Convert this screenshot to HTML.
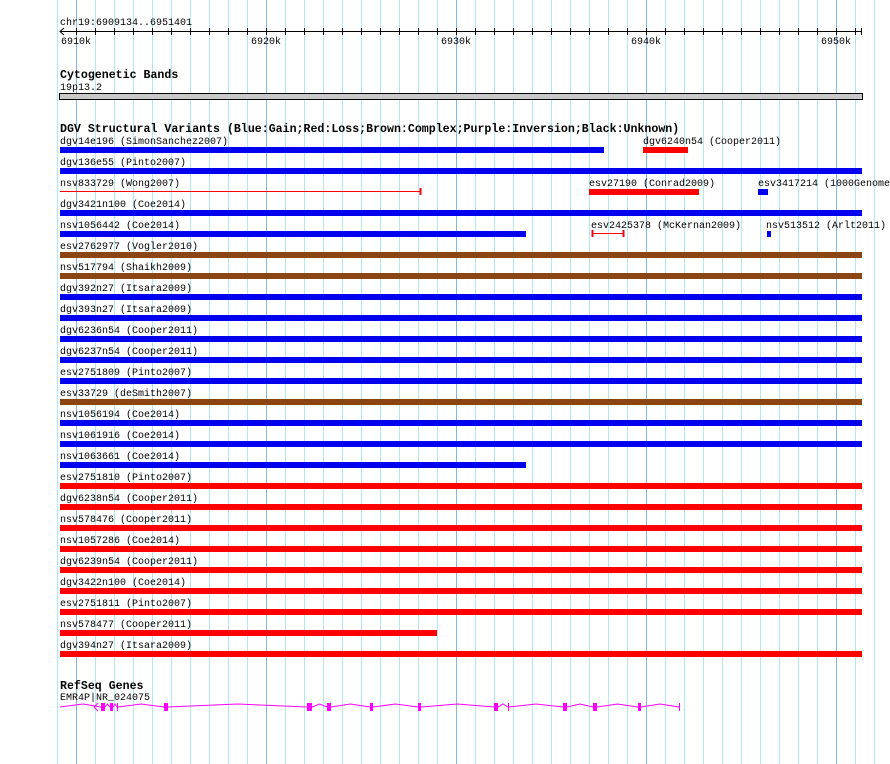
<!DOCTYPE html>
<html><head><meta charset="utf-8"><style>
html,body{margin:0;padding:0;background:#fff;width:890px;height:764px;overflow:hidden}
svg{display:block}
text{font-family:"Liberation Mono","DejaVu Sans Mono",monospace;font-size:10px;fill:#000}
.b{font-weight:bold;font-size:11.6px}
</style></head><body>
<svg width="890" height="764" viewBox="0 0 890 764" xmlns="http://www.w3.org/2000/svg">
<g stroke="#b0e8f2" stroke-width="1">
<line x1="57.5" y1="0" x2="57.5" y2="764"/><line x1="95.5" y1="0" x2="95.5" y2="764"/><line x1="114.5" y1="0" x2="114.5" y2="764"/><line x1="133.5" y1="0" x2="133.5" y2="764"/><line x1="152.5" y1="0" x2="152.5" y2="764"/><line x1="171.5" y1="0" x2="171.5" y2="764"/><line x1="190.5" y1="0" x2="190.5" y2="764"/><line x1="209.5" y1="0" x2="209.5" y2="764"/><line x1="228.5" y1="0" x2="228.5" y2="764"/><line x1="247.5" y1="0" x2="247.5" y2="764"/><line x1="285.5" y1="0" x2="285.5" y2="764"/><line x1="304.5" y1="0" x2="304.5" y2="764"/><line x1="323.5" y1="0" x2="323.5" y2="764"/><line x1="342.5" y1="0" x2="342.5" y2="764"/><line x1="361.5" y1="0" x2="361.5" y2="764"/><line x1="380.5" y1="0" x2="380.5" y2="764"/><line x1="399.5" y1="0" x2="399.5" y2="764"/><line x1="418.5" y1="0" x2="418.5" y2="764"/><line x1="437.5" y1="0" x2="437.5" y2="764"/><line x1="475.5" y1="0" x2="475.5" y2="764"/><line x1="494.5" y1="0" x2="494.5" y2="764"/><line x1="513.5" y1="0" x2="513.5" y2="764"/><line x1="532.5" y1="0" x2="532.5" y2="764"/><line x1="551.5" y1="0" x2="551.5" y2="764"/><line x1="570.5" y1="0" x2="570.5" y2="764"/><line x1="589.5" y1="0" x2="589.5" y2="764"/><line x1="608.5" y1="0" x2="608.5" y2="764"/><line x1="627.5" y1="0" x2="627.5" y2="764"/><line x1="665.5" y1="0" x2="665.5" y2="764"/><line x1="684.5" y1="0" x2="684.5" y2="764"/><line x1="703.5" y1="0" x2="703.5" y2="764"/><line x1="722.5" y1="0" x2="722.5" y2="764"/><line x1="741.5" y1="0" x2="741.5" y2="764"/><line x1="760.5" y1="0" x2="760.5" y2="764"/><line x1="779.5" y1="0" x2="779.5" y2="764"/><line x1="798.5" y1="0" x2="798.5" y2="764"/><line x1="817.5" y1="0" x2="817.5" y2="764"/><line x1="855.5" y1="0" x2="855.5" y2="764"/><line x1="874.5" y1="0" x2="874.5" y2="764"/>
</g>
<g stroke="#80b8ec" stroke-width="1">
<line x1="76.5" y1="0" x2="76.5" y2="764"/><line x1="266.5" y1="0" x2="266.5" y2="764"/><line x1="456.5" y1="0" x2="456.5" y2="764"/><line x1="646.5" y1="0" x2="646.5" y2="764"/><line x1="836.5" y1="0" x2="836.5" y2="764"/>
</g>

<text x="60" y="25">chr19:6909134..6951401</text>
<line x1="60" y1="31.5" x2="862" y2="31.5" stroke="#000"/>
<path d="M64 28 L60 31.5 L64 35" stroke="#000" fill="none"/>
<path stroke="#000" d="M76.5 28v7M95.5 28v7M114.5 28v7M133.5 28v7M152.5 28v7M171.5 28v7M190.5 28v7M209.5 28v7M228.5 28v7M247.5 28v7M266.5 28v7M285.5 28v7M304.5 28v7M323.5 28v7M342.5 28v7M361.5 28v7M380.5 28v7M399.5 28v7M418.5 28v7M437.5 28v7M456.5 28v7M475.5 28v7M494.5 28v7M513.5 28v7M532.5 28v7M551.5 28v7M570.5 28v7M589.5 28v7M608.5 28v7M627.5 28v7M646.5 28v7M665.5 28v7M684.5 28v7M703.5 28v7M722.5 28v7M741.5 28v7M760.5 28v7M779.5 28v7M798.5 28v7M817.5 28v7M836.5 28v7M855.5 28v7M861.5 28v7"/>
<text x="61" y="44">6910k</text><text x="251" y="44">6920k</text><text x="441" y="44">6930k</text><text x="631" y="44">6940k</text><text x="821" y="44">6950k</text>

<text x="60" y="78" class="b">Cytogenetic Bands</text>
<text x="60" y="90">19p13.2</text>
<rect x="59.5" y="93.5" width="803" height="6" fill="#c8c8c8" stroke="#000"/>

<text x="60" y="132" class="b">DGV Structural Variants (Blue:Gain;Red:Loss;Brown:Complex;Purple:Inversion;Black:Unknown)</text>

<text x="60" y="144">dgv14e196 (SimonSanchez2007)</text><rect x="60" y="147" width="544" height="6" fill="#0000ee"/>
<text x="643" y="144">dgv6240n54 (Cooper2011)</text><rect x="643" y="147" width="45" height="6" fill="#ff0000"/>
<text x="60" y="165">dgv136e55 (Pinto2007)</text><rect x="60" y="168" width="802" height="6" fill="#0000ee"/>
<text x="60" y="186">nsv833729 (Wong2007)</text>
<line x1="60" y1="191.5" x2="421" y2="191.5" stroke="#ff0000"/><line x1="420.5" y1="188" x2="420.5" y2="195" stroke="#ff0000" stroke-width="2"/>
<text x="589" y="186">esv27190 (Conrad2009)</text><rect x="589" y="189" width="110" height="6" fill="#ff0000"/>
<text x="758" y="186">esv3417214 (1000Genomes</text><rect x="758" y="189" width="10" height="6" fill="#0000ee"/>
<text x="60" y="207">dgv3421n100 (Coe2014)</text><rect x="60" y="210" width="802" height="6" fill="#0000ee"/>
<text x="60" y="228">nsv1056442 (Coe2014)</text><rect x="60" y="231" width="466" height="6" fill="#0000ee"/>
<text x="591" y="228">esv2425378 (McKernan2009)</text>
<line x1="592" y1="233.5" x2="624" y2="233.5" stroke="#ff0000"/><line x1="592.5" y1="230" x2="592.5" y2="237" stroke="#ff0000" stroke-width="2"/><line x1="623.5" y1="230" x2="623.5" y2="237" stroke="#ff0000" stroke-width="2"/>
<text x="766" y="228">nsv513512 (Arlt2011)</text><rect x="767" y="231" width="4" height="6" fill="#0000ee"/>
<text x="60" y="249">esv2762977 (Vogler2010)</text><rect x="60" y="252" width="802" height="6" fill="#8b4513"/>
<text x="60" y="270">nsv517794 (Shaikh2009)</text><rect x="60" y="273" width="802" height="6" fill="#8b4513"/>
<text x="60" y="291">dgv392n27 (Itsara2009)</text><rect x="60" y="294" width="802" height="6" fill="#0000ee"/>
<text x="60" y="312">dgv393n27 (Itsara2009)</text><rect x="60" y="315" width="802" height="6" fill="#0000ee"/>
<text x="60" y="333">dgv6236n54 (Cooper2011)</text><rect x="60" y="336" width="802" height="6" fill="#0000ee"/>
<text x="60" y="354">dgv6237n54 (Cooper2011)</text><rect x="60" y="357" width="802" height="6" fill="#0000ee"/>
<text x="60" y="375">esv2751809 (Pinto2007)</text><rect x="60" y="378" width="802" height="6" fill="#0000ee"/>
<text x="60" y="396">esv33729 (deSmith2007)</text><rect x="60" y="399" width="802" height="6" fill="#8b4513"/>
<text x="60" y="417">nsv1056194 (Coe2014)</text><rect x="60" y="420" width="802" height="6" fill="#0000ee"/>
<text x="60" y="438">nsv1061916 (Coe2014)</text><rect x="60" y="441" width="802" height="6" fill="#0000ee"/>
<text x="60" y="459">nsv1063661 (Coe2014)</text><rect x="60" y="462" width="466" height="6" fill="#0000ee"/>
<text x="60" y="480">esv2751810 (Pinto2007)</text><rect x="60" y="483" width="802" height="6" fill="#ff0000"/>
<text x="60" y="501">dgv6238n54 (Cooper2011)</text><rect x="60" y="504" width="802" height="6" fill="#ff0000"/>
<text x="60" y="522">nsv578476 (Cooper2011)</text><rect x="60" y="525" width="802" height="6" fill="#ff0000"/>
<text x="60" y="543">nsv1057286 (Coe2014)</text><rect x="60" y="546" width="802" height="6" fill="#ff0000"/>
<text x="60" y="564">dgv6239n54 (Cooper2011)</text><rect x="60" y="567" width="802" height="6" fill="#ff0000"/>
<text x="60" y="585">dgv3422n100 (Coe2014)</text><rect x="60" y="588" width="802" height="6" fill="#ff0000"/>
<text x="60" y="606">esv2751811 (Pinto2007)</text><rect x="60" y="609" width="802" height="6" fill="#ff0000"/>
<text x="60" y="627">nsv578477 (Cooper2011)</text><rect x="60" y="630" width="377" height="6" fill="#ff0000"/>
<text x="60" y="648">dgv394n27 (Itsara2009)</text><rect x="60" y="651" width="802" height="6" fill="#ff0000"/>

<text x="60" y="689" class="b">RefSeq Genes</text>
<text x="60" y="700">EMR4P|NR_024075</text>
<polyline fill="none" stroke="#ff00ff" points="60,707 83,704 101,707 105,707 107.5,704 110,707 113,707 115,704 117,707 118,707 141,704 164,707 168,707 237.5,704 307,707 312,707 319.5,704 327,707 331,707 350.5,704 370,707 373,707 395.5,704 418,707 421,707 457.5,704 494,707 498,707 503,704 508,707 509,707 536,704 563,707 567,707 580,704 593,707 597,707 617.5,704 638,707 641,707 660,704 679,707 680,707"/>
<g fill="#ff00ff">
<rect x="101" y="703" width="4" height="8"/><rect x="110" y="703" width="3" height="8"/><rect x="117" y="703" width="1" height="8"/><rect x="164" y="703" width="4" height="8"/><rect x="307" y="703" width="5" height="8"/><rect x="327" y="703" width="4" height="8"/><rect x="370" y="703" width="3" height="8"/><rect x="418" y="703" width="3" height="8"/><rect x="494" y="703" width="4" height="8"/><rect x="508" y="703" width="1" height="8"/><rect x="563" y="703" width="4" height="8"/><rect x="593" y="703" width="4" height="8"/><rect x="638" y="703" width="3" height="8"/><rect x="679" y="703" width="1" height="8"/>
</g>
<path d="M98 703 L94 707 L98 711" stroke="#ff00ff" fill="none"/>
</svg>
</body></html>
